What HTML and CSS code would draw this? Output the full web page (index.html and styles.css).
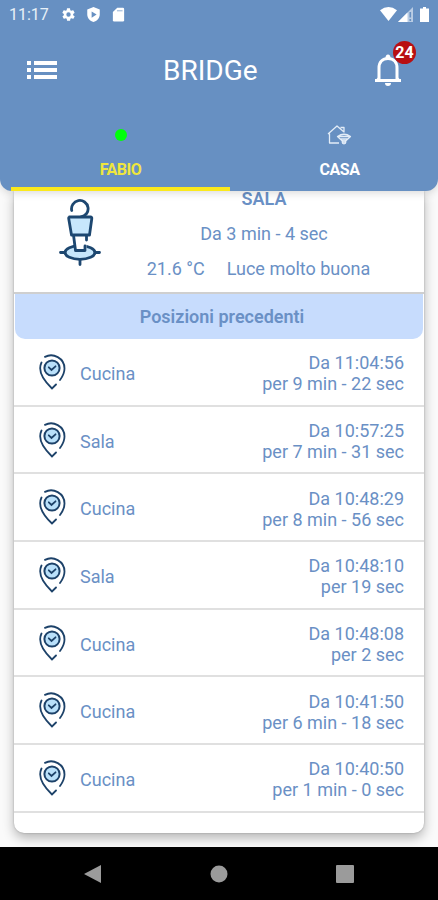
FILE: index.html
```html
<!DOCTYPE html>
<html lang="it">
<head>
    <meta charset="utf-8">
    <title>BRIDGe</title>
    <link rel="stylesheet" href="styles.css">
</head>
<body>
    <!-- shared icon -->
    <svg class="defs">
        <symbol id="pin" viewBox="0 0 28 36">
            <g fill="none" stroke="#1d4269" stroke-width="1.8" stroke-linecap="round">
                <path d="M7 2.900C15-1.500 26.500 4 26.500 14.500Q26.500 20 22 26"/>
                <path d="M3.500 8.500C-1 18 6 27 14 34.500L18 30.500"/>
                <circle cx="14" cy="14" r="7.600" fill="#b9e0fa" stroke-width="2"/>
                <path d="M10.800 13.300l2.700 2.600 4-3.600"/>
            </g>
        </symbol>
    </svg>

    <header class="header">
        <div class="status-bar">
            <span class="clock">11:17</span>
            <svg class="status-icon" viewBox="0 0 24 24"><path fill="#fff" fill-rule="evenodd" d="M19.4 13a7.500 7.500 0 0 0 0-2l2.100-1.600a.5.5 0 0 0 .1-.6l-2-3.500a.5.5 0 0 0-.6-.2l-2.500 1a7 7 0 0 0-1.700-1L14.500 2.400A.5.5 0 0 0 14 2h-4a.5.5 0 0 0-.5.4l-.4 2.700a7 7 0 0 0-1.700 1l-2.500-1a.5.5 0 0 0-.6.2l-2 3.500a.5.5 0 0 0 .1.600L4.600 11a7.500 7.500 0 0 0 0 2l-2.100 1.600a.5.5 0 0 0-.1.600l2 3.500c.1.200.4.300.6.200l2.500-1a7 7 0 0 0 1.700 1l.4 2.700c0 .2.200.4.500.4h4c.2 0 .5-.2.500-.4l.4-2.700a7 7 0 0 0 1.700-1l2.500 1c.2.100.5 0 .6-.2l2-3.500a.5.5 0 0 0-.1-.6zM12 15.500a3.500 3.500 0 1 1 0-7 3.500 3.500 0 0 1 0 7z"/></svg>
            <svg class="status-icon shield" viewBox="0 0 24 24"><path fill="#fff" fill-rule="evenodd" d="M12 0L2 4v8c0 6 4.500 10.500 10 12 5.500-1.500 10-6 10-12V4zM9 7l8 5-8 5z"/></svg>
            <svg class="status-icon card-icon" viewBox="0 0 24 24"><path fill="#fff" d="M10 1h9a2 2 0 0 1 2 2v18a2 2 0 0 1-2 2H5a2 2 0 0 1-2-2V8z"/><path fill="#a9c1de" d="M9.500 5h9v2h-9z"/></svg>
            <div class="signals">
                <svg width="17" height="14" viewBox="0 0 17 14"><path fill="#fff" d="M0 3.200Q8.500-3.200 17 3.200L8.500 14z"/></svg>
                <svg width="15" height="15" viewBox="0 0 15 15"><path fill="#b9cce4" d="M15 0v15H0z"/><path fill="#fff" d="M9.500 5.500V15H0z"/><path stroke="#6790c2" stroke-width="1.600" d="M12.300 5v5.500M12.300 12v2"/></svg>
                <svg class="battery" width="9" height="15" viewBox="0 0 9 15"><path fill="#fff" d="M3 0h3v1.500h3V15H0V1.500h3z"/></svg>
            </div>
        </div>

        <div class="toolbar">
            <svg class="menu" width="30" height="18" viewBox="0 0 30 18"><path fill="#fff" d="M0 0h4v4H0zM7 0h23v4H7zM0 7h4v4H0zM7 7h23v4H7zM0 14h4v4H0zM7 14h23v4H7z"/></svg>
            <h1 class="title">BRIDGe</h1>
            <div class="bell">
                <svg width="28" height="33" viewBox="0 0 28 33">
                    <g fill="none" stroke="#fff" stroke-width="3">
                        <path d="M5 26V14C5 8 8.500 4.500 14 4.500S23 8 23 14v12"/>
                        <path d="M1 26.500h26"/>
                    </g>
                    <path fill="#fff" d="M11.500 4a2.500 3.500 0 0 1 5 0zM11 29h6a3 3 0 0 1-6 0zM1 26.500l4-4v4zM27 26.500l-4-4v4z"/>
                </svg>
                <span class="badge">24</span>
            </div>
        </div>

        <nav class="tabs">
            <div class="tab active">
                <div class="tab-icon"><span class="dot"></span></div>
                <span>FABIO</span>
            </div>
            <div class="tab">
                <div class="tab-icon">
                    <svg width="25" height="20" viewBox="0 0 25 20">
                        <g fill="none" stroke="#e2ecf7" stroke-width="1.300" stroke-linejoin="round">
                            <path d="M12 18H2.500V8.500M1 9l9-8 7 6M13.500 2.500H17v5"/>
                            <path d="M10.500 11.500q6.500-4.500 13 0L17 17.500zM11 11.500h12M13.500 14h7"/>
                            <circle cx="17" cy="17" r="1.800"/>
                        </g>
                    </svg>
                </div>
                <span>CASA</span>
            </div>
        </nav>
    </header>

    <main class="content">
        <section class="card">
            <div class="current">
                <svg class="person" width="42" height="68" viewBox="0 0 42 68">
                    <g fill="none" stroke="#1d4770" stroke-width="2.800" stroke-linecap="round" stroke-linejoin="round">
                        <path d="M12.700 11.500A8.300 8.300 0 1 1 22 18"/>
                        <ellipse cx="21" cy="53.500" rx="15" ry="6.800" fill="#c7e7fc"/>
                        <path fill="#fff" stroke="none" d="M15 36h12.500v15H15z"/>
                        <path d="M14.500 36l2 15.500h9.500V47M27.500 36v5"/>
                        <path fill="#c7e7fc" d="M10.500 18h21q1.500 0 1.300 1.500L30.500 36h-18L9.700 19.500Q9.500 18 11 18z"/>
                        <path d="M1.500 53.500H6M36 53.500h4.500M21 61v4.500"/>
                    </g>
                </svg>
                <div class="info">
                    <strong>SALA</strong>
                    <span>Da 3 min - 4 sec</span>
                    <div class="sensors"><span>21.6 °C</span><span>Luce molto buona</span></div>
                </div>
            </div>

            <h2 class="list-title">Posizioni precedenti</h2>

            <ul class="positions">
                <li><svg class="pin"><use href="#pin"/></svg><span class="room">Cucina</span><span class="time">Da 11:04:56<br>per 9 min - 22 sec</span></li>
                <li><svg class="pin"><use href="#pin"/></svg><span class="room">Sala</span><span class="time">Da 10:57:25<br>per 7 min - 31 sec</span></li>
                <li><svg class="pin"><use href="#pin"/></svg><span class="room">Cucina</span><span class="time">Da 10:48:29<br>per 8 min - 56 sec</span></li>
                <li><svg class="pin"><use href="#pin"/></svg><span class="room">Sala</span><span class="time">Da 10:48:10<br>per 19 sec</span></li>
                <li><svg class="pin"><use href="#pin"/></svg><span class="room">Cucina</span><span class="time">Da 10:48:08<br>per 2 sec</span></li>
                <li><svg class="pin"><use href="#pin"/></svg><span class="room">Cucina</span><span class="time">Da 10:41:50<br>per 6 min - 18 sec</span></li>
                <li><svg class="pin"><use href="#pin"/></svg><span class="room">Cucina</span><span class="time">Da 10:40:50<br>per 1 min - 0 sec</span></li>
            </ul>
        </section>
    </main>

    <footer class="nav-bar">
        <svg width="17" height="18" viewBox="0 0 17 18"><path fill="#9b9b9b" d="M17 0v18L0 9z"/></svg>
        <svg width="18" height="18" viewBox="0 0 18 18"><circle cx="9" cy="9" r="8.500" fill="#9b9b9b"/></svg>
        <svg width="18" height="18" viewBox="0 0 18 18"><rect width="18" height="18" rx="1" fill="#9b9b9b"/></svg>
    </footer>
</body>
</html>
```

FILE: styles.css
```css
* {
    box-sizing: border-box;
}

body {
    margin: 0;
    height: 900px;
    display: flex;
    flex-direction: column;
    overflow: hidden;
    font-family: Roboto, "Liberation Sans", sans-serif;
    font-size: 18px;
    color: #6a90c5;
    background: #fafafa;
}

.defs {
    display: none;
}

/* Header */
.header {
    position: relative;
    z-index: 1;
    flex: none;
    height: 191px;
    display: flex;
    flex-direction: column;
    color: #fff;
    background: #6790c2;
    border-radius: 0 0 12px 12px;
    box-shadow: 0 2px 8px rgba(0, 0, 0, 0.15);
}

.status-bar {
    height: 28px;
    padding: 0 9px;
    display: flex;
    align-items: center;
}

.clock {
    width: 52px;
    font-size: 16px;
    color: #e8f0f8;
}

.status-icon {
    width: 15px;
    height: 15px;
}

.shield {
    margin-left: 10px;
}

.card-icon {
    margin-left: 10px;
}

.signals {
    margin-left: auto;
    display: flex;
    align-items: center;
    gap: 1px;
}

.battery {
    margin-left: 6px;
}

.toolbar {
    height: 84px;
    padding: 0 36px 0 27px;
    display: flex;
    align-items: center;
}

.title {
    margin: 0 0 0 106px;
    font-size: 28px;
    font-weight: 400;
}

.bell {
    position: relative;
    height: 33px;
    margin-left: auto;
}

.badge {
    position: absolute;
    top: -13px;
    left: 19px;
    width: 23px;
    height: 23px;
    border-radius: 50%;
    font-size: 16px;
    font-weight: 700;
    line-height: 23px;
    text-align: center;
    background: #b80f12;
}

.tabs {
    height: 79px;
    padding-left: 11px;
    display: flex;
    overflow: hidden;
    border-radius: 0 0 12px 0;
}

.tab {
    flex: none;
    width: 219px;
    padding-top: 8px;
    display: flex;
    flex-direction: column;
    align-items: center;
    font-size: 16px;
    font-weight: 700;
    line-height: 19px;
    letter-spacing: -0.5px;
    border-bottom: 4px solid transparent;
}

.tab.active {
    color: #efe63c;
    border-color: #fbe91b;
}

.tab-icon {
    height: 30px;
    margin-bottom: 10px;
    display: flex;
    align-items: center;
}

.dot {
    width: 12px;
    height: 12px;
    border-radius: 50%;
    background: #00ff0a;
}

/* Card */
.content {
    height: 656px;
    padding: 0 14px;
}

.card {
    height: 642px;
    background: #fff;
    border-radius: 0 0 10px 10px;
    box-shadow: 0 5px 12px rgba(0, 0, 0, 0.28), 0 0 2px rgba(0, 0, 0, 0.25);
}

.current {
    height: 103px;
    display: flex;
    border-bottom: 2px solid #cfcfcf;
}

.person {
    flex: none;
    margin: 8px 0 0 45px;
}

.info {
    flex: 1;
    display: flex;
    flex-direction: column;
    align-items: center;
    margin: -10px 0 0 3px;
    line-height: 35px;
}

.info strong {
    font-weight: 600;
}

.sensors {
    display: flex;
    gap: 22px;
    padding-right: 11px;
}

.list-title {
    height: 45px;
    margin: 0 1px;
    padding-left: 6px;
    font-size: 18px;
    font-weight: 600;
    line-height: 46px;
    text-align: center;
    background: #c7dcfd;
    border-radius: 0 0 10px 10px;
}

.positions {
    margin: 0;
    padding: 0;
    list-style: none;
}

.positions li {
    height: 67.7px;
    padding: 0 20px 0 24px;
    display: flex;
    align-items: center;
    border-bottom: 2px solid #e0e0e0;
}

.pin {
    width: 28px;
    height: 36px;
}

.room {
    margin: 3px 0 0 14px;
}

.time {
    margin: 3px 0 0 auto;
    text-align: right;
    line-height: 21px;
}

/* Android buttons */
.nav-bar {
    height: 53px;
    padding: 0 84px;
    display: flex;
    align-items: center;
    justify-content: space-between;
    background: #000;
}
```
